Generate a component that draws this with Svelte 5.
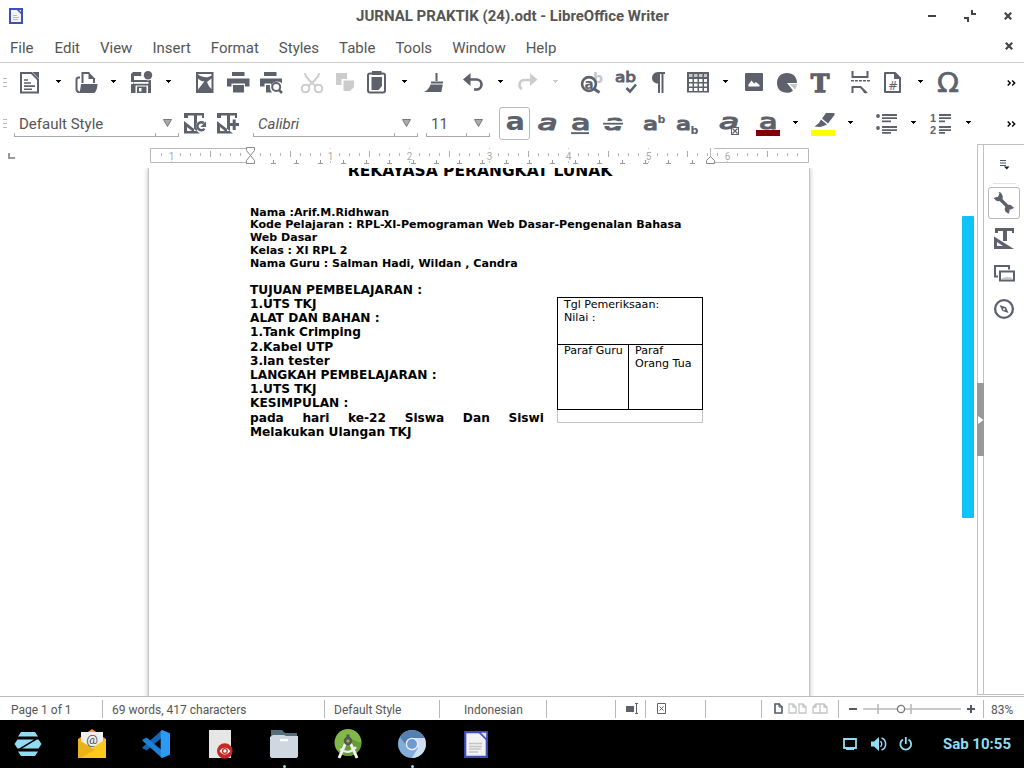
<script>
  const menus = ['File', 'Edit', 'View', 'Insert', 'Format', 'Styles', 'Table', 'Tools', 'Window', 'Help'];

  const icons = {
    new: `<path d="M3 2h10.5l6.500 6.500V21.500H3z" fill="none" stroke="currentColor" stroke-width="2"/><path d="M14.500 1H21v6.500zM6 8.200h4v1.500H6zM6 11.300h7v1.500H6zM6 14.300h11v1.600H6zM6 17.400h8v1.500H6z"/>`,
    open: `<path d="M8.500 12V2h7M20 8v4M6 6.500H4.500C3 6.500 2.500 8 2.500 9v9c0 2 1 3 2.500 3" fill="none" stroke="currentColor" stroke-width="2"/><path d="M14.500 1l7 7h-7zM7 13h16.500c0 3-1 7-3 9H4.500c2-2 2-6 2.500-9z"/>`,
    save: `<path d="M1 3l2-2h8.500c-.5 1.500-.5 3 0 4H4v4h17v13H1v-9h2v-2H1z"/><path d="M4.500 6h8v1.500h-8zM3.500 11h15v1.700h-15zM5.500 14.500H18V22H5.500z" fill="#fff"/><path d="M7 15.500h9.500V22H7zM9 17v3.500h2.500V17z" fill-rule="evenodd"/><circle cx="18" cy="4.500" r="5" fill="#fff"/><circle cx="18" cy="4.300" r="4.200"/>`,
    pdf: `<path d="M3 1h17.500v21H3z"/><path d="M5 3h13.500v1.500c-4 3-9 2-13.500-1zM5 7.500c2 2 4 2.800 6.500 2.800L5 18.500zM18.500 7.500V18c-2-2-3.500-4-4.500-7z" fill="#fff"/>`,
    print: `<path d="M6 1h12.500v4H6zM1 7.500h22.500v8H19v-3H5.500v3H1z"/><path d="M7 14h11v7.500H7z"/>`,
    preview: `<path d="M5 1h12.500v4H5zM1 7.500h22v5c-2-3-9-3-11 2V12.500H5.500v3H1zM7 14h4c-.5 3 .5 6 2 7.500H7z"/><circle cx="17.200" cy="16" r="4" fill="#fff" stroke="currentColor" stroke-width="2"/><path d="M20 19l3 3" stroke="currentColor" stroke-width="2.500"/>`,
    cut: `<g fill="none" stroke="currentColor" stroke-width="2"><circle cx="5.500" cy="17.500" r="3.800"/><circle cx="18.500" cy="17.500" r="3.800"/><path d="M5 2c0 3 2 5 4 7l6.500 6M19 2c0 3-2 5-4 7l-6.500 6"/></g>`,
    copy: `<path d="M3 2h11v6H8.500v6H3zM10.500 9.500H21V16l-4 4h-6.500z"/>`,
    paste: `<rect x="3" y="2.500" width="17" height="19" rx="2" fill="none" stroke="currentColor" stroke-width="2"/><path d="M7 0h9.500v4H7zM6.500 6h10.500v9l-3.500 4h-7z"/>`,
    brush: `<path d="M13.500 2h2v8h-2zM9 10.500h12v2H9zM8.500 13.500h12.300l-1.500 7.500H2c3-1.500 5.500-4 6.500-7.500z"/>`,
    undo: `<path d="M7 8.500h8.500a5 5 0 0 1 0 10h-2.500" fill="none" stroke="currentColor" stroke-width="2.600"/><path d="M2 8.500l7.500-6.500v13z"/>`,
    redo: `<path d="M17 9H8a4.800 4.800 0 0 0-2 9" fill="none" stroke="currentColor" stroke-width="2.600"/><path d="M21.500 8.500L14 2v13z"/>`,
    find: `<text x="13" y="11.500" font-size="14" font-family="DejaVu Sans" font-weight="bold" fill="#c4c6ca">b</text><circle cx="9" cy="13" r="6.900" fill="#fff" stroke="currentColor" stroke-width="2.600"/><path d="M13.500 17.500l6 4" stroke="currentColor" stroke-width="3"/><text x="4.600" y="17.500" font-size="13.500" font-family="DejaVu Sans" font-weight="bold">a</text>`,
    spell: `<text x="1" y="11" font-size="14" font-family="DejaVu Sans" stroke="currentColor" stroke-width=".9" textLength="21" lengthAdjust="spacingAndGlyphs">ab</text><path d="M12.500 17l3.500 3.500 6-7" fill="none" stroke="currentColor" stroke-width="2.600"/>`,
    pilcrow: `<path d="M18 1v2h-1.500v19h-2V3H13v19h-2v-9.500C7.500 12.500 5 10 5 7s2.500-6 6-6z"/>`,
    table: `<path d="M1 1h22v20.500H1z"/><path d="M3 8h3.500v3H3zM8 8h3.500v3H8zM13 8h3.500v3H13zM18 8h3v3h-3zM3 12.500h3.500v3H3zM8 12.500h3.500v3H8zM13 12.500h3.500v3H13zM18 12.500h3v3h-3zM3 17h3.500v3H3zM8 17h3.500v3H8zM13 17h3.500v3H13zM18 17h3v3h-3z" fill="#fff"/><path d="M3 3h3.500v3H3zM8 3h3.500v3H8zM13 3h3.500v3H13zM18 3h3v3h-3z" fill="#c4c6ca"/>`,
    image: `<rect x="3" y="2" width="18" height="18" rx="1"/><path d="M6.500 15.500v-2l3-4 2.500 3 2-1.500 3.500 3v1.500z" fill="#fff"/>`,
    chart: `<path d="M12 12h10c0-6-4-10-10-10S2 6 2 12s4 9.800 10 9.800c2.500 0 4.500-.8 6-2.300z"/><path d="M14.500 13H22c0 2-.8 4-2 5.500z" fill="#c4c6ca"/>`,
    text: `<text x="12" y="20.500" text-anchor="middle" font-size="25" font-family="DejaVu Serif" font-weight="bold" stroke="currentColor" stroke-width="1.300">T</text>`,
    break: `<path d="M4.500 0v6h15V0M4.500 22v-6h8l6 6" fill="none" stroke="currentColor" stroke-width="2"/><path d="M12.500 15l7.500 7h-4zM3 9h3v1.600H3zM7 9h3v1.600H7zM11 9h3v1.600h-3zM15 9h3v1.600h-3zM19 9h3v1.600h-3z"/>`,
    field: `<path d="M4 2h10l5 5v14H4z" fill="none" stroke="currentColor" stroke-width="2" stroke-linejoin="round"/><path d="M13 1l7 7h-7z"/><text x="7" y="18.500" font-size="12" font-family="DejaVu Sans">#</text>`,
    omega: `<text x="1" y="21" font-size="26.500" font-family="DejaVu Sans" stroke="currentColor" stroke-width=".6" textLength="22" lengthAdjust="spacingAndGlyphs">Ω</text>`,
    styleUpdate: `<path d="M1 1h20v5h-2V3.500h-5V19h-3V3.500H5V6H1zM1 9l16 12.500H1zM4 15v4h5z" fill-rule="evenodd"/><circle cx="18.500" cy="14" r="5.500" fill="#fff"/><path d="M21 11.200a4 4 0 1 0 .5 5.500" fill="none" stroke="currentColor" stroke-width="2.500"/><path d="M23 9.500V15h-5.500z"/>`,
    styleNew: `<path d="M1 1h20v5h-2V3.500h-5V19h-3V3.500H5V6H1zM1 9l16 12.500H1zM4 15v4h5z" fill-rule="evenodd"/><path d="M14 8h9v9h-9z" fill="#fff"/><path d="M16.700 7.500h3V11H23v3h-3.300v4h-3v-4H13.500v-3h3.200z"/>`,
    bold: `<text x="2.500" y="18" font-size="24" font-family="DejaVu Sans" font-weight="bold" textLength="19.500" lengthAdjust="spacingAndGlyphs">a</text>`,
    italic: `<text x="2.500" y="17.500" font-size="21" font-family="DejaVu Sans" font-style="italic" stroke="currentColor" stroke-width="1.200" textLength="20" lengthAdjust="spacingAndGlyphs">a</text>`,
    underline: `<text x="3" y="17.500" font-size="21" font-family="DejaVu Sans" stroke="currentColor" stroke-width="1.200" textLength="19.500" lengthAdjust="spacingAndGlyphs">a</text><path d="M3 20.200h18v1.900H3z"/>`,
    strike: `<text x="3" y="18" font-size="22" font-family="DejaVu Sans" font-style="italic" stroke="currentColor" stroke-width="1.200" textLength="19.500" lengthAdjust="spacingAndGlyphs">a</text><path d="M2 9.200h20v4.800H2z" fill="#fff"/><path d="M2 10.800h20v1.800H2z"/>`,
    sup: `<text x="1" y="17.500" font-size="18.500" font-family="DejaVu Sans" stroke="currentColor" stroke-width="1.200" textLength="15" lengthAdjust="spacingAndGlyphs">a</text><text x="15.500" y="10.500" font-size="11" font-family="DejaVu Sans" font-weight="bold">b</text>`,
    sub: `<text x="1" y="17.500" font-size="18.500" font-family="DejaVu Sans" stroke="currentColor" stroke-width="1.200" textLength="15" lengthAdjust="spacingAndGlyphs">a</text><text x="15.500" y="22" font-size="11" font-family="DejaVu Sans" font-weight="bold">b</text>`,
    clear: `<text x="2" y="17" font-size="21" font-family="DejaVu Sans" font-style="italic" stroke="currentColor" stroke-width="1.200" textLength="20" lengthAdjust="spacingAndGlyphs">a</text><rect x="14.500" y="15.500" width="7" height="7" fill="#fff" stroke="currentColor"/><path d="M15.500 16.500l5 5m0-5l-5 5" stroke="currentColor" stroke-width="1.200"/>`,
    color: `<text x="3" y="17" font-size="21" font-family="DejaVu Sans" stroke="currentColor" stroke-width="1.200" textLength="18.500" lengthAdjust="spacingAndGlyphs">a</text><path d="M0 18h24v6H0z" fill="#800000"/>`,
    highlight: `<path d="M0 18h24v6H0z" fill="#ff0"/><path d="M15 1h8.500v2l-6.500 8.500-6-5zM10 7.500l6 5-3.500 1.500L9 15l-5.500-.5L8 11z"/>`,
    bullets: `<circle cx="4" cy="4" r="1.900"/><circle cx="4" cy="16" r="1.900"/><path d="M8 2h15v2H8zM8 5.300h15v1.800H8zM8 8.500h9v1.800H8zM8 14h15v2H8zM8 17.300h15v1.800H8zM8 20h9v1.700H8z"/>`,
    numbers: `<text x="1" y="9.500" font-size="11" font-family="Liberation Sans" font-weight="bold">1</text><text x="1" y="21.500" font-size="11" font-family="Liberation Sans" font-weight="bold">2</text><path d="M10 2h12v2H10zM10 5.300h12v1.800H10zM10 8.500h6v1.800h-6zM10 14h12v2H10zM10 17.300h12v1.800H10zM10 20h6v1.700h-6z"/>`,
    wrench: `<path d="M8 8l8.500 8.500" stroke="currentColor" stroke-width="3.200"/><circle cx="6.500" cy="6" r="4.300"/><circle cx="17" cy="18" r="4.300"/><path d="M7.800 1.500l-1.700 4.300-4.600 1.500-1-6z" fill="#fff"/><path d="M15.800 22.500l1.600-4.200 4.800-1.600 1.500 6.300z" fill="#fff"/><path d="M7 1.500l1.800.8-1.300 3.500M2 7.500l3.500-.6M16.300 22.300l1-3.800M21.700 16.500l-3.800 1.800" stroke="currentColor" stroke-width="1.200" fill="none"/>`,
    styles: `<path d="M3 1h19v5h-2V4h-5v10h-4V4H6v2H3zM2 9.500l20 12.500H2zM5 15v4h6z" fill-rule="evenodd"/>`,
    gallery: `<g fill="none" stroke="currentColor" stroke-width="2"><path d="M6 14.500H3V4h14v3.500"/><path d="M8 9.500h14v9H8z"/></g><path d="M10 17v-1l5-1 5 .5v1.500z" fill="#c4c6ca"/>`,
    compass: `<circle cx="12" cy="12" r="8.900" fill="none" stroke="currentColor" stroke-width="2.300"/><path d="M7.500 8l6.500 2.200 2.500 5.800-6-2zM12 11.200a1 1 0 1 0 .1 0z" fill-rule="evenodd"/>`
  };

  // [icon, space before it, dimmed]; "arrow" is a drop-down marker
  const standard = [
    ['new', 11], ['arrow', 14], ['open', 13], ['arrow', 13], ['save', 14], ['arrow', 12],
    ['pdf', 22], ['print', 9], ['preview', 9],
    ['cut', 17, true], ['copy', 9, true], ['paste', 8], ['arrow', 13], ['brush', 15],
    ['undo', 15], ['arrow', 13], ['redo', 13, true], ['arrow', 13, true],
    ['find', 22], ['spell', 10], ['pilcrow', 9],
    ['table', 15], ['arrow', 13], ['image', 14], ['chart', 9], ['text', 9],
    ['break', 16], ['field', 9], ['arrow', 13], ['omega', 13]
  ];
  const stylesGroup = [['styleUpdate', 4], ['styleNew', 9]];
  const character = [
    ['italic', 5], ['underline', 9], ['strike', 9], ['sup', 17], ['sub', 9], ['clear', 18],
    ['color', 15], ['arrow', 13], ['highlight', 13], ['arrow', 13],
    ['bullets', 21], ['arrow', 13], ['numbers', 13], ['arrow', 13]
  ];

  const inch = 79.5;
  const ticks = [];
  for (let i = -9; i <= 55; i++) {
    const x = Math.round(100 + (i * inch) / 8);
    if (i === 0 || x > 655) continue;
    ticks.push({ x, kind: i % 8 === 0 ? 'number' : i % 4 === 0 ? 'half' : 'small', n: Math.abs(i / 8) });
  }
  const tabs = Array.from({ length: 19 }, (_, i) => Math.round(123 + i * 23.25));

  const summary = [
    'TUJUAN PEMBELAJARAN :', '1.UTS TKJ', 'ALAT DAN BAHAN :', '1.Tank Crimping', '2.Kabel UTP',
    '3.lan tester', 'LANGKAH PEMBELAJARAN :', '1.UTS TKJ', 'KESIMPULAN :'
  ];
</script>

{#snippet tools(list)}
  {#each list as [name, gap, dim]}
    {#if name === 'arrow'}
      <svg class="arrow" class:dim style="margin-left:{gap}px" viewBox="0 0 5 3"><path d="M0 0h5v1H4v1H3v1H2V2H1V1H0z" /></svg>
    {:else}
      <svg class="ico" class:dim style="margin-left:{gap}px" viewBox="0 0 24 24">{@html icons[name]}</svg>
    {/if}
  {/each}
{/snippet}

{#snippet grip()}
  <span class="grip"><i></i><i></i><i></i></span>
{/snippet}

{#snippet combo(cls, label)}
  <div class="combo {cls}">
    <span class="value">{label}</span>
    <span class="drop"><svg width="9" height="8" viewBox="0 0 9 8"><path d="M.5.500h8L4.500 7.500z" fill="#aaa" stroke="#777" /></svg></span>
  </div>
{/snippet}

{#snippet more()}
  <svg class="more" viewBox="0 0 9 6"><path d="M.7.500L3.200 3 .7 5.500M5.200.500L7.700 3 5.200 5.500" fill="none" stroke="#000" stroke-width="1.400" /></svg>
{/snippet}

<div class="desktop">
  <header class="titlebar">
    <svg class="appicon" width="14" height="16" viewBox="0 0 14 16"><path d="M1 1h12v14H1z" fill="#f4f4f4" stroke="#3f51b5" stroke-width="2" /><path d="M8 1l5 5" stroke="#3f51b5" stroke-width="1.500" /><path d="M4 7.500h4M4 9.500h6M4 11.500h5" stroke="#bbb" /></svg>
    <h1>JURNAL PRAKTIK (24).odt - LibreOffice Writer</h1>
    <div class="winbtns">
      <svg width="8" height="10" viewBox="0 0 8 10"><path d="M0 4h8v2H0z" /></svg>
      <svg width="12" height="12" viewBox="0 0 12 12"><path d="M7 0h2v3h3v2H7zM0 7h5v5H3V9H0z" /></svg>
      <svg width="8" height="8" viewBox="0 0 8 8"><path d="M.800.800l6.400 6.400M7.200.800L.800 7.200" stroke="#444" stroke-width="2.200" /></svg>
    </div>
  </header>

  <nav class="menubar">
    {#each menus as m}<span>{m}</span>{/each}
    <svg class="closedoc" width="8" height="8" viewBox="0 0 8 8"><path d="M.800.800l6.400 6.400M7.200.800L.800 7.200" stroke="#444" stroke-width="2.200" /></svg>
  </nav>

  <div class="toolbar first">{@render grip()}{@render tools(standard)}{@render more()}</div>
  <div class="toolbar second">
    {@render grip()}
    {@render combo('para', 'Default Style')}
    {@render tools(stylesGroup)}
    {@render combo('font', 'Calibri')}
    {@render combo('size', '11')}
    <span class="pressed"><svg class="ico" viewBox="0 0 24 24">{@html icons.bold}</svg></span>
    {@render tools(character)}
    {@render more()}
  </div>

  <main>
    <div class="editor">
      <div class="rulerrow">
        <svg class="tabkind" width="7" height="6" viewBox="0 0 7 6"><path d="M0 0h2v4h5v2H0z" fill="#999" /></svg>
        <svg class="ruler" width="660" height="20" viewBox="0 0 660 20">
          <path d="M96 4.500H.500v14H96M564 4.500h94.500v14H564M560.500 4v10" fill="none" stroke="#b8b8b8" />
          {#each ticks as t}
            {#if t.kind === 'number'}
              <text x={t.x + 0.5} y="15.500" text-anchor="middle">{t.n}</text>
              <path d="M{t.x + 0.5} 4v1M{t.x + 0.5} 17v2" stroke="#c4c4c4" />
            {:else if t.kind === 'half'}
              <path d="M{t.x + 0.5} 7v6" stroke="#aaa" />
            {:else}
              <path d="M{t.x + 0.5} 9v3" stroke="#b8b8b8" />
            {/if}
          {/each}
          {#each tabs as x}<path d="M{x + 0.5} 16v3M{x - 2} 19.500h5" stroke="#999" />{/each}
          <path d="M96.500 3.500h8v3l-4 5-4-5zM100.500 11.500l4 5v3h-8v-3z" fill="#fff" stroke="#888" />
          <path d="M560.500 12.500l4 4v3h-8v-3z" fill="#fff" stroke="#888" />
        </svg>
      </div>
      <div class="canvas">
        <article class="page">
          <h2>REKAYASA PERANGKAT LUNAK</h2>
          <div class="meta">
            <p>Nama :Arif.M.Ridhwan</p>
            <p>Kode Pelajaran : RPL-XI-Pemograman Web Dasar-Pengenalan Bahasa Web Dasar</p>
            <p>Kelas : XI RPL 2</p>
            <p>Nama Guru : Salman Hadi, Wildan , Candra</p>
          </div>
          <div class="body">
            <div class="summary">
              {#each summary as line}<p>{line}</p>{/each}
              <p class="wide">pada hari ke-22 Siswa Dan Siswi Melakukan Ulangan TKJ</p>
            </div>
            <div class="frame">
              <div class="cell top">Tgl Pemeriksaan:<br />Nilai :</div>
              <div class="pair">
                <div class="cell guru">Paraf Guru</div>
                <div class="cell">Paraf<br />Orang Tua</div>
              </div>
            </div>
          </div>
        </article>
        <div class="track"><div class="thumb"></div></div>
      </div>
    </div>
    <div class="splitter"><span><svg width="6" height="8" viewBox="0 0 6 8"><path d="M0 0l5.500 4L0 8z" fill="#fff" /></svg></span></div>
    <aside>
      <svg class="deck" width="10" height="10" viewBox="0 0 10 10"><path d="M0 .500h6M0 3h6M0 5.500h6" stroke="#4a5570" stroke-width="1.200" /><path d="M4 6.500h5.500L6.800 9.500z" fill="#10183a" /></svg>
      <hr />
      <span class="active"><svg class="ico" viewBox="0 0 24 24">{@html icons.wrench}</svg></span>
      <svg class="ico st" viewBox="0 0 24 24">{@html icons.styles}</svg>
      <svg class="ico" viewBox="0 0 24 24">{@html icons.gallery}</svg>
      <svg class="ico" viewBox="0 0 24 24">{@html icons.compass}</svg>
    </aside>
  </main>

  <footer class="status">
    <span class="s1">Page 1 of 1</span>
    <span class="s2">69 words, 417 characters</span>
    <span class="s3">Default Style</span>
    <span class="s4">Indonesian</span>
    <span class="s5"></span>
    <span class="s6"><svg width="13" height="11" viewBox="0 0 13 11"><path d="M0 3h8v6H0z" fill="#5c616c" /><path d="M9 .500h3M9 10.500h3M10.500 0v11" stroke="#5c616c" /></svg></span>
    <span class="s7"><svg width="9" height="11" viewBox="0 0 9 11"><path d="M.500.500h8v10h-8zM2.500 3.500l4 4m0-4l-4 4" fill="none" stroke="#5c616c" /></svg></span>
    <span class="s8"></span>
    <span class="s9">
      <svg width="56" height="11" viewBox="0 0 56 11"><g fill="none"><path d="M1 1h4l3 3v6H1z" stroke="#555a66" stroke-width="1.600" /><path d="M5 0v4h4" stroke="#555a66" /><g stroke="#c4c6ca" stroke-width="1.300"><path d="M15 1h4l3 3v6h-7zM19 1v3h3M25 1h4l3 3v6h-7zM29 1v3h3M46 1v9h-7V4l3-3zM42 1v3h-3M46 1h4l3 3v6h-7M50 1v3h3" /></g></g></svg>
    </span>
    <span class="s10">
      <svg width="128" height="12" viewBox="0 0 128 12"><path d="M0 6h8M118 6h8M122 2v8" stroke="#555a66" stroke-width="2" /><path d="M14 6h98M29 1v10M62 1v10" stroke="#b8b8b8" stroke-width="1.600" /><circle cx="52" cy="6" r="3.600" fill="#fff" stroke="#777" stroke-width="1.300" /></svg>
    </span>
    <span class="s11">83%</span>
  </footer>

  <div class="taskbar">
    <div class="apps">
      <span><svg viewBox="0 0 28 28"><path d="M7 2h14l3 4.500H4zM7 26h14l3-4.500H4zM3.500 9.500H20L5 18.500H3.500L.500 14zM24.500 9.500l3 4.500-3 4.500H8l15-9z" fill="#8fdcf3" /></svg></span>
      <span><svg viewBox="0 0 28 28"><path d="M0 9L14-1l14 10v18H0z" fill="#f5a000" /><path d="M3 2h22v20H3z" fill="#eee" /><path d="M0 9l14 9 14-9v19H0z" fill="#fcc91d" /><path d="M0 10l17 10L2 28H0z" fill="#e9b21a" /><text x="14" y="14" text-anchor="middle" font-size="13" font-family="Roboto" fill="#555">@</text></svg></span>
      <span><svg viewBox="0 0 30 30"><path d="M21.500 0v8L5 22l-4.500-2.500v-1z" fill="#1465b4" /><path d="M21.500 30v-8L5 8 .500 10.500v1z" fill="#1b80d6" /><path d="M21.500 0L30 3.500v23L21.500 30 20 29V1z" fill="#2a9af3" /></svg></span>
      <span><svg viewBox="0 0 28 28"><path d="M3 0h22v28H3z" fill="#e6e6e6" /><circle cx="18.800" cy="21" r="7.800" fill="#c62828" /><path d="M13.500 21c3-4.500 8-4.500 10.800 0-3 4.500-8 4.500-10.800 0z" fill="#fff" /><circle cx="18.900" cy="21" r="2.300" fill="#fff" stroke="#c62828" stroke-width="1.300" /></svg></span>
      <span class="running"><svg viewBox="0 0 28 28"><path d="M1 0h11l3 3h12v6H1z" fill="#546e7a" /><path d="M0 7l3-2h11l2 1h12v20.500l-1.500 1.500h-25L0 26.500z" fill="#cfd8e0" /><path d="M10 9h8v2.300h-8z" fill="#fff" /></svg></span>
      <span><svg viewBox="0 0 28 28"><circle cx="14" cy="12.500" r="13.500" fill="#82b84a" /><path d="M15 8l12 5a13.500 13.500 0 0 1-14 13l-9-5z" fill="#659c37" /><path d="M13 10L5 28M15 10l8 18" stroke="#f2f2f2" stroke-width="3" /><path d="M6 19c5 4 11 4 16-2" fill="none" stroke="#eee" stroke-width="2.500" /><circle cx="14" cy="11" r="3" fill="#82b84a" stroke="#555" stroke-width="2.600" /><path d="M12.500 4.500h3v4h-3z" fill="#555" /></svg></span>
      <span class="running"><svg viewBox="0 0 28 28"><circle cx="14" cy="14" r="14" fill="#83aedb" /><path d="M14 8h12.600A14 14 0 0 0 2 7l6.500 9z" fill="#547fb0" /><path d="M14 8h12.600A14 14 0 0 1 14 28l6-10z" fill="#cfdff1" /><circle cx="14" cy="14" r="6.300" fill="#e9f1fa" /><circle cx="14" cy="14" r="5" fill="#6f9bd3" /></svg></span>
      <span><svg viewBox="0 0 28 28"><path d="M3.200 2.200h21.600v24.600H3.200z" fill="#f2f2f2" stroke="#3f4fb5" stroke-width="2.200" /><path d="M17 2h8v8z" fill="#dfe3f5" stroke="#3f4fb5" stroke-width="1.600" /><path d="M7 13.500h13M7 16.500h13M7 19h12M7 22h9" stroke="#c4c4c4" stroke-width="1.300" /></svg></span>
    </div>
    <div class="tray">
      <svg width="14" height="12" viewBox="0 0 14 12"><path d="M1 1h12v9H1z" fill="none" stroke="currentColor" stroke-width="1.800" /><path d="M3 10h8v2H3z" fill="currentColor" /></svg>
      <svg width="16" height="14" viewBox="0 0 16 14"><path d="M0 4.500h3L8 0v14L3 9.500H0z" fill="currentColor" /><path d="M9.500 4.200a4 4 0 0 1 0 5.600M10.500 1a6.400 6.400 0 0 1 0 12" fill="none" stroke="currentColor" stroke-width="1.500" /></svg>
      <svg width="14" height="14" viewBox="0 0 14 14"><path d="M4 2.500a5.400 5.400 0 1 0 5.500 0M6.800 0v7" fill="none" stroke="currentColor" stroke-width="1.800" /></svg>
      <time>Sab 10:55</time>
    </div>
  </div>
</div>

<style>
  :global(body) { background: #fff; }
  .desktop { width: 1024px; height: 768px; display: flex; flex-direction: column; overflow: hidden; background: #fff; font-family: Roboto, sans-serif; color: #555; }
  p, h1, h2 { margin: 0; }
  svg { display: block; flex: none; fill: currentColor; }

  .titlebar { height: 32px; display: grid; grid-template-columns: 120px 1fr 120px; align-items: center; padding: 0 12px 0 13px; box-sizing: border-box; }
  .appicon { margin-left: -4px; }
  h1 { font-size: 15px; font-weight: 700; text-align: center; white-space: nowrap; color: #555; }
  .winbtns { display: flex; justify-content: flex-end; align-items: center; gap: 28px; color: #444; }
  .menubar { height: 31px; padding: 2px 11px 0 10px; box-sizing: border-box; display: flex; align-items: center; gap: 20px; font-size: 15px; border-bottom: 1px solid #ccc; flex: none; }
  .menubar span:first-child { margin-right: 1px; }
  .closedoc { margin-left: auto; margin-bottom: 4px; }

  .toolbar { display: flex; align-items: center; color: #5c616c; padding: 0 8px 0 3px; flex: none; box-sizing: border-box; }
  .first { height: 40px; }
  .second { height: 41px; }
  .ico { width: 24px; height: 24px; overflow: visible; }
  .arrow { width: 5px; height: 3px; margin-top: -3px; color: #000; }
  .dim { color: #ccc; }
  .more { width: 9px; height: 6px; margin-left: auto; }
  .grip { display: grid; gap: 2px; width: 4px; }
  .grip i { height: 1px; background: #b8b8b8; margin-bottom: 1px; }
  .combo { display: flex; align-items: center; height: 26px; font-size: 15px; color: #555; box-sizing: border-box; background: linear-gradient(#aaa, #aaa) 0 100% / 100% 1px no-repeat, linear-gradient(#aaa, #aaa) 0 100% / 1px 4px no-repeat, linear-gradient(#aaa, #aaa) 100% 100% / 1px 4px no-repeat; }
  .para { width: 165px; margin-left: 7px; }
  .font { width: 165px; margin-left: 13px; font-style: italic; }
  .size { width: 64px; margin-left: 8px; }
  .value { flex: 1; padding-left: 5px; }
  .drop { align-self: stretch; width: 24px; padding: 0 0 2px 8px; box-sizing: border-box; display: flex; align-items: center; background: linear-gradient(#aaa, #aaa) 0 100% / 1px 4px no-repeat; }
  .pressed { width: 31px; height: 33px; margin-left: 9px; border: 1px solid #b8b8b8; border-radius: 3px; box-sizing: border-box; display: grid; place-items: center; }

  main { flex: 1; display: flex; min-height: 0; }
  .editor { flex: 1; display: flex; flex-direction: column; min-width: 0; }
  .rulerrow { height: 24px; display: flex; align-items: flex-start; flex: none; }
  .tabkind { margin: 9px 135px 0 8px; }
  .ruler { font-family: Roboto, sans-serif; }
  .ruler text { font-size: 10px; fill: #aaa; }
  .canvas { flex: 1; min-height: 0; display: flex; overflow: hidden; }
  .page { width: 460px; flex: none; margin-left: 148px; padding: 0 99px 0 101px; height: 600px; border: solid #c4c4c4; border-width: 0 1px; box-shadow: 0 0 5px #bbb; color: #000; font-family: "DejaVu Sans", sans-serif; }
  h2 { font-size: 15.500px; line-height: 18px; text-align: center; margin-top: -6px; font-weight: 700; white-space: nowrap; }
  .meta { margin-top: 26.700px; font-size: 11.070px; line-height: 12.800px; font-weight: 700; width: 450px; }
  .body { display: flex; margin-top: 12.250px; }
  .summary { width: 294px; font-size: 12.170px; line-height: 14.180px; font-weight: 700; }
  .wide { text-align: justify; }
  .frame { width: 146px; margin: 14px 0 0 13px; height: 126px; box-sizing: border-box; border: 1px solid #c4c4c4; border-top: 0; display: flex; flex-direction: column; font-size: 11.070px; line-height: 13px; flex: none; }
  .frame > div { margin: 0 -1px; }
  .cell { padding: 0 6px; box-sizing: border-box; white-space: nowrap; }
  .top { border: 1px solid #000; height: 48px; }
  .pair { display: flex; height: 65px; border: solid #000; border-width: 0 1px 1px; box-sizing: border-box; }
  .pair .cell { margin-top: -1px; }
  .guru { width: 71px; border-right: 1px solid #000; }
  .track { margin-left: auto; width: 15px; padding-top: 48px; }
  .thumb { width: 12px; height: 302px; background: #0fc3f7; border-radius: 1px; }
  .splitter { width: 7px; border: 1px solid #c0c0c0; box-sizing: border-box; padding-top: 238px; height: 551px; }
  .splitter span { display: flex; align-items: center; height: 73px; margin: 0 -1px; background: #999; padding-left: 1px; }
  aside { width: 40px; height: 551px; box-sizing: border-box; border: solid #c0c0c0; border-width: 1px 0; display: flex; flex-direction: column; align-items: center; color: #5c616c; }
  .deck { margin: 15px 0 0 2px; }
  hr { width: 23px; border: 0; border-top: 1px solid #e4e4e4; margin: 13px 0 3px; }
  .active { width: 32px; height: 32px; box-sizing: border-box; border: 1px solid #b8b8b8; border-radius: 3px; display: grid; place-items: center; }
  aside > .ico { margin-top: 11px; }
  aside > .st { margin: 8px 0 0; }

  .status { height: 24px; flex: none; box-sizing: border-box; border-top: 1px solid #bbb; display: flex; align-items: center; font-size: 12px; }
  .status span { height: 18px; box-sizing: border-box; border-right: 1px solid #b8b8b8; display: flex; align-items: center; flex: none; white-space: nowrap; padding-top: 2px; }
  .status .s1 { width: 103px; padding-left: 11px; }
  .status .s2 { width: 222px; padding-left: 9px; }
  .status .s3 { width: 115px; padding-left: 9px; }
  .status .s4 { width: 107px; padding-left: 24px; }
  .status .s5 { width: 69px; }
  .status .s6 { width: 30px; padding: 0 0 0 10px; }
  .status .s7 { width: 60px; padding: 0 0 1px 11px; }
  .status .s8 { width: 56px; }
  .status .s9 { width: 77px; padding: 0 0 0 12px; }
  .status .s10 { width: 145px; padding: 0 0 0 10px; }
  .status .s11 { padding-left: 7px; border: 0; }

  .taskbar { height: 48px; flex: none; background: #000; display: flex; justify-content: space-between; }
  .apps { display: flex; gap: 36px; padding-left: 14px; }
  .apps span { width: 28px; display: grid; align-content: start; padding-top: 10px; row-gap: 7px; justify-items: center; }
  .apps svg { width: 28px; height: 28px; overflow: visible; }
  .running::after { content: ''; width: 3px; height: 3px; border-radius: 50%; background: #8fdcf3; }
  .tray { display: flex; align-items: center; color: #8fdcf3; padding-right: 13px; }
  .tray svg { margin-right: 14px; }
  .tray svg:nth-child(2) { margin-right: 12px; }
  time { font-size: 15px; font-weight: 700; margin-left: 16px; white-space: nowrap; }
</style>
